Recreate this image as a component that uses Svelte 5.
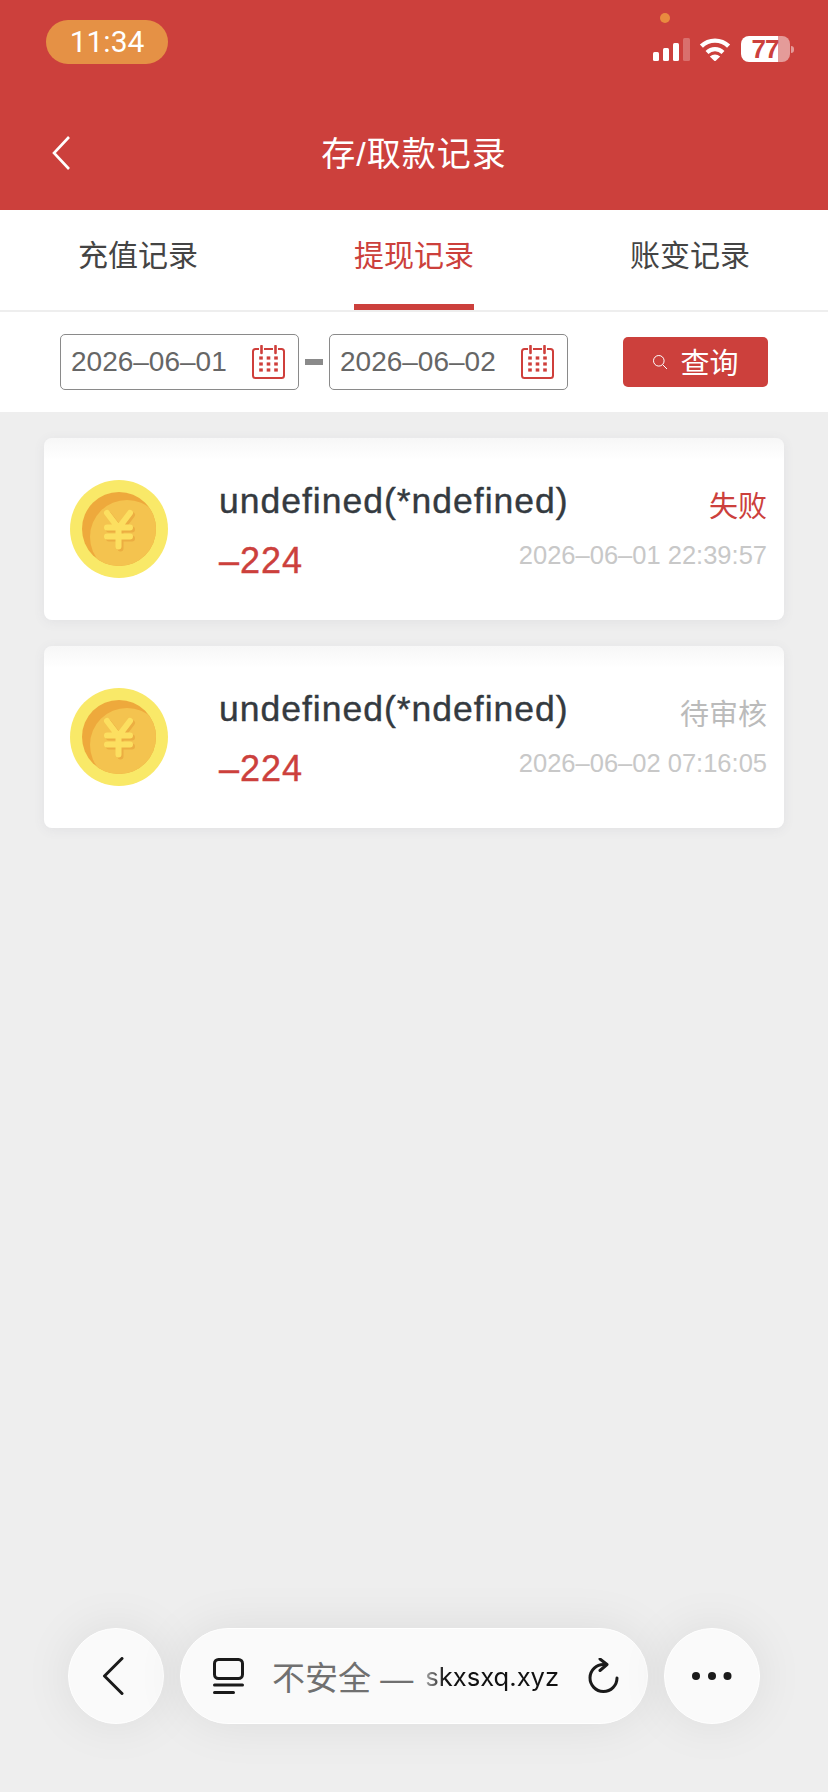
<script lang="ts">
  type Record = { status: string; failed: boolean; time: string }

  const tabs = ['充值记录', '提现记录', '账变记录']
  let activeTab = $state(1)

  const dates = ['2026–06–01', '2026–06–02']

  const records: Record[] = [
    { status: '失败', failed: true, time: '2026–06–01 22:39:57' },
    { status: '待审核', failed: false, time: '2026–06–02 07:16:05' }
  ]
</script>

<div class="page">
  <header class="header">
    <div class="status-bar">
      <span class="time">11:34</span>
      <span class="rec-dot"></span>
      <div class="indicators">
        <svg class="signal" width="37" height="23" viewBox="0 0 37 23" aria-hidden="true">
          <rect x="0" y="14" width="6" height="9" rx="1.5" fill="#fff" />
          <rect x="10" y="10" width="6" height="13" rx="1.5" fill="#fff" />
          <rect x="20" y="5" width="6" height="18" rx="1.5" fill="#fff" />
          <rect x="30" y="0" width="7" height="23" rx="1.5" fill="#fff" opacity="0.25" />
        </svg>
        <svg class="wifi" width="32" height="24" viewBox="0 0 32 24" aria-hidden="true">
          <path d="M2.4 9.2A19.5 19.5 0 0 1 29.6 9.2" fill="none" stroke="#fff" stroke-width="4.4" />
          <path d="M8 15.4A11.5 11.5 0 0 1 24 15.4" fill="none" stroke="#fff" stroke-width="4.2" />
          <path d="M16 24.5L10.8 19.4Q16 15.8 21.2 19.4Z" fill="#fff" />
        </svg>
        <div class="battery"><span>77</span></div>
      </div>
    </div>
    <div class="nav">
      <svg class="nav-back" width="20" height="36" viewBox="0 0 20 36" aria-hidden="true">
        <path d="M18 2L3 18L18 34" fill="none" stroke="#fff" stroke-width="2.6" />
      </svg>
      <h1>存/取款记录</h1>
    </div>
  </header>

  <nav class="tabs">
    {#each tabs as tab, i}
      <button class="tab" class:active={activeTab === i} onclick={() => (activeTab = i)}>{tab}</button>
    {/each}
  </nav>

  <div class="filter">
    <div class="range">
      {#each dates as date, i}
        {#if i > 0}<span class="sep"></span>{/if}
        <div class="date-box">
          <span>{date}</span>
          <svg width="33" height="34" viewBox="0 0 33 34" aria-hidden="true">
            <path d="M7 4H3.5Q1 4 1 6.5V30.5Q1 33 3.5 33H29.5Q32 33 32 30.5V6.5Q32 4 29.5 4H26M12 4H21" fill="none" stroke="#cf3f3b" stroke-width="2" />
            <path d="M9.5 1V8M23.5 1V8" stroke="#cf3f3b" stroke-width="2.6" stroke-linecap="round" />
            {#each [13, 19, 25] as y}
              {#each [9, 16.5, 24] as x}
                <rect x={x - 1.8} y={y - 1.6} width="3.6" height="3.2" fill="#cf3f3b" />
              {/each}
            {/each}
          </svg>
        </div>
      {/each}
    </div>
    <button class="query">
      <svg width="16" height="16" viewBox="0 0 16 16" aria-hidden="true">
        <circle cx="6.8" cy="6.8" r="5.3" fill="none" stroke="#fff" stroke-width="1" />
        <path d="M10.8 10.8L15 15" stroke="#fff" stroke-width="1" />
      </svg>
      <span>查询</span>
    </button>
  </div>

  <main class="list">
    {#each records as record}
      <article class="card">
        <svg class="coin" width="98" height="98" viewBox="0 0 98 98" aria-hidden="true">
          <defs>
            <clipPath id="coin-face"><circle cx="49" cy="49" r="37" /></clipPath>
          </defs>
          <circle cx="49" cy="49" r="49" fill="#f9e968" />
          <circle cx="49" cy="49" r="37" fill="#eea93c" />
          <circle cx="57" cy="57" r="37" fill="#f4c34f" clip-path="url(#coin-face)" />
          <g fill="none" stroke="#ecae42" stroke-width="6" stroke-linecap="round" transform="translate(2 2)">
            <path d="M37 33L48.500 48L60 33M48.500 48V66.500M37 47.500H60M37 56.500H60" />
          </g>
          <g fill="none" stroke="#fcdf60" stroke-width="6" stroke-linecap="round">
            <path d="M37 33L48.500 48L60 33M48.500 48V66.500M37 47.500H60M37 56.500H60" />
          </g>
        </svg>
        <div class="info">
          <div class="name">undefined(*ndefined)</div>
          <div class="amount">–224</div>
        </div>
        <div class="meta">
          <div class="state" class:failed={record.failed}>{record.status}</div>
          <div class="stamp">{record.time}</div>
        </div>
      </article>
    {/each}
  </main>

  <div class="browser-bar">
    <button class="round" aria-label="back">
      <svg class="bar-back" width="22" height="38" viewBox="0 0 22 38" aria-hidden="true">
        <path d="M20 1.500L2.500 19L20 36.500" fill="none" stroke="#1a1a1a" stroke-width="3" stroke-linecap="round" stroke-linejoin="round" />
      </svg>
    </button>
    <div class="address">
      <svg width="31" height="36" viewBox="0 0 31 36" aria-hidden="true">
        <rect x="1.500" y="1.500" width="28" height="19" rx="4" fill="none" stroke="#1a1a1a" stroke-width="3" />
        <path d="M1.500 27H29.500M1.500 34.500H20.500" stroke="#1a1a1a" stroke-width="3" stroke-linecap="round" />
      </svg>
      <span class="insecure">不安全 —</span>
      <span class="url">skxsxq.xyz</span>
      <svg class="reload" width="32" height="36" viewBox="0 0 32 36" aria-hidden="true">
        <path d="M17 6.500A13.500 13.500 0 1 0 30 20" fill="none" stroke="#1a1a1a" stroke-width="3" stroke-linecap="round" />
        <path d="M13 1L20 6.500L13 12.500" fill="none" stroke="#1a1a1a" stroke-width="3" stroke-linecap="round" stroke-linejoin="round" />
      </svg>
    </div>
    <button class="round" aria-label="more">
      <svg width="40" height="8" viewBox="0 0 40 8" aria-hidden="true">
        <circle cx="4" cy="4" r="4" fill="#1a1a1a" />
        <circle cx="20" cy="4" r="4" fill="#1a1a1a" />
        <circle cx="35.500" cy="4" r="4" fill="#1a1a1a" />
      </svg>
    </button>
  </div>
</div>

<style>
  :global(body) {
    margin: 0;
    background: #eeeeee;
  }

  .page {
    position: relative;
    height: 1792px;
    overflow: hidden;
    background: #eeeeee;
    font-family: 'Liberation Sans', 'Noto Sans CJK SC', sans-serif;
  }

  .header {
    height: 210px;
    background: #cc403c;
    color: #fff;
  }

  .status-bar {
    position: relative;
    height: 96px;
    box-sizing: border-box;
    display: flex;
    justify-content: space-between;
    align-items: flex-start;
    padding: 20px 34px 0 46px;
  }

  .time {
    width: 122px;
    height: 44px;
    border-radius: 22px;
    background: #e59145;
    font-family: Roboto, sans-serif;
    font-size: 30px;
    line-height: 44px;
    text-align: center;
  }

  .rec-dot {
    position: absolute;
    left: 660px;
    top: 13px;
    width: 10px;
    height: 10px;
    border-radius: 50%;
    background: #e98a3f;
  }

  .indicators {
    display: flex;
    align-items: flex-end;
    padding-top: 16px;
  }

  .signal {
    margin: 0 9px 1px 0;
  }

  .wifi {
    margin: 0 10px 1px 0;
  }

  .battery {
    position: relative;
    width: 49px;
    height: 26px;
    margin-right: 4px;
    border-radius: 8px;
    background: linear-gradient(90deg, #fff 37px, rgba(255, 255, 255, 0.48) 37px);
    color: #cc403c;
    font-size: 26px;
    font-weight: 700;
    line-height: 26px;
    text-align: center;
  }

  .battery span {
    display: block;
    transform: translateX(-0.5px);
    letter-spacing: -1px;
  }

  .battery::after {
    content: '';
    position: absolute;
    left: 50px;
    top: 10px;
    width: 3px;
    height: 7px;
    border-radius: 0 4px 4px 0;
    background: rgba(255, 255, 255, 0.48);
  }

  .nav {
    position: relative;
    height: 114px;
    display: flex;
    align-items: center;
    justify-content: center;
  }

  .nav-back {
    position: absolute;
    left: 51px;
    top: 39px;
  }

  .nav h1 {
    margin: 2px 0 0;
    font-size: 34px;
    font-weight: 400;
    line-height: 40px;
    letter-spacing: 1px;
  }

  .tabs {
    display: grid;
    grid-template-columns: repeat(3, 1fr);
    height: 102px;
    box-sizing: border-box;
    background: #fff;
    border-bottom: 2px solid #eeeeee;
  }

  .tab {
    position: relative;
    padding: 0 0 14px;
    border: none;
    background: none;
    color: #444444;
    font-family: inherit;
    font-size: 30px;
  }

  .tab.active {
    color: #cc403c;
  }

  .tab.active::after {
    content: '';
    position: absolute;
    left: 78px;
    bottom: 0;
    width: 120px;
    height: 6px;
    background: #cc403c;
  }

  .filter {
    height: 100px;
    display: flex;
    align-items: center;
    justify-content: space-between;
    padding: 0 60px;
    background: #fff;
  }

  .range {
    display: flex;
    align-items: center;
  }

  .sep {
    width: 18px;
    height: 6px;
    margin: 0 6px;
    background: #8a8a8a;
  }

  .date-box {
    width: 239px;
    height: 56px;
    box-sizing: border-box;
    display: flex;
    align-items: center;
    justify-content: space-between;
    padding: 0 13px 0 10px;
    border: 1px solid #8a8a8a;
    border-radius: 5px;
    color: #666666;
    font-size: 28px;
  }

  .query {
    width: 145px;
    height: 50px;
    display: flex;
    align-items: center;
    justify-content: center;
    gap: 12px;
    padding: 0;
    border: none;
    border-radius: 5px;
    background: #cc403c;
    color: #fff;
    font-family: inherit;
    font-size: 29px;
  }

  .query span {
    margin-top: -3px;
  }

  .list {
    display: flex;
    flex-direction: column;
    gap: 26px;
    padding: 26px 44px 0;
  }

  .card {
    height: 182px;
    box-sizing: border-box;
    display: flex;
    padding: 0 17px 0 26px;
    border-radius: 8px;
    background: linear-gradient(180deg, #f7f7f7, #fff 22px);
    box-shadow: 0 2px 12px rgba(90, 90, 110, 0.08);
  }

  .coin {
    flex-shrink: 0;
    margin: 42px 51px 0 0;
  }

  .info {
    flex: 1;
    min-width: 0;
    padding-top: 41px;
    white-space: nowrap;
  }

  .name {
    color: #343a40;
    font-size: 35.500px;
    line-height: 44px;
    letter-spacing: 1px;
    -webkit-text-stroke: 0.4px #343a40;
  }

  .amount {
    margin-top: 18px;
    color: #cc403c;
    font-size: 36px;
    line-height: 40px;
    letter-spacing: 1px;
    -webkit-text-stroke: 0.4px #cc403c;
  }

  .meta {
    flex-shrink: 0;
    display: flex;
    flex-direction: column;
    align-items: flex-end;
    padding-top: 51px;
  }

  .state {
    color: #bbbbbb;
    font-size: 29px;
    line-height: 36px;
  }

  .state.failed {
    color: #cc403c;
  }

  .stamp {
    margin-top: 15px;
    color: #c8c8c8;
    font-size: 25.500px;
    line-height: 30px;
    white-space: nowrap;
  }

  .browser-bar {
    position: absolute;
    left: 68px;
    top: 1628px;
    display: flex;
    gap: 16px;
  }

  .round,
  .address {
    height: 96px;
    box-sizing: border-box;
    border: 1.500px solid #ffffff;
    background: #fafafa;
    box-shadow: 0 0 50px rgba(0, 0, 0, 0.08);
  }

  .round {
    width: 96px;
    display: flex;
    align-items: center;
    justify-content: center;
    padding: 0;
    border-radius: 50%;
  }

  .bar-back {
    margin-right: 6px;
  }

  .address {
    width: 468px;
    display: flex;
    align-items: center;
    padding: 0 28px 0 32px;
    border-radius: 48px;
  }

  .insecure {
    margin-left: 28px;
    color: #707070;
    font-size: 33px;
    white-space: nowrap;
  }

  .url {
    margin-left: 12px;
    color: #111111;
    font-family: Inter, sans-serif;
    font-size: 25.600px;
    white-space: nowrap;
    -webkit-mask-image: linear-gradient(90deg, rgba(0, 0, 0, 0.35), #000 20px);
    mask-image: linear-gradient(90deg, rgba(0, 0, 0, 0.35), #000 20px);
  }

  .reload {
    margin-left: auto;
  }
</style>
